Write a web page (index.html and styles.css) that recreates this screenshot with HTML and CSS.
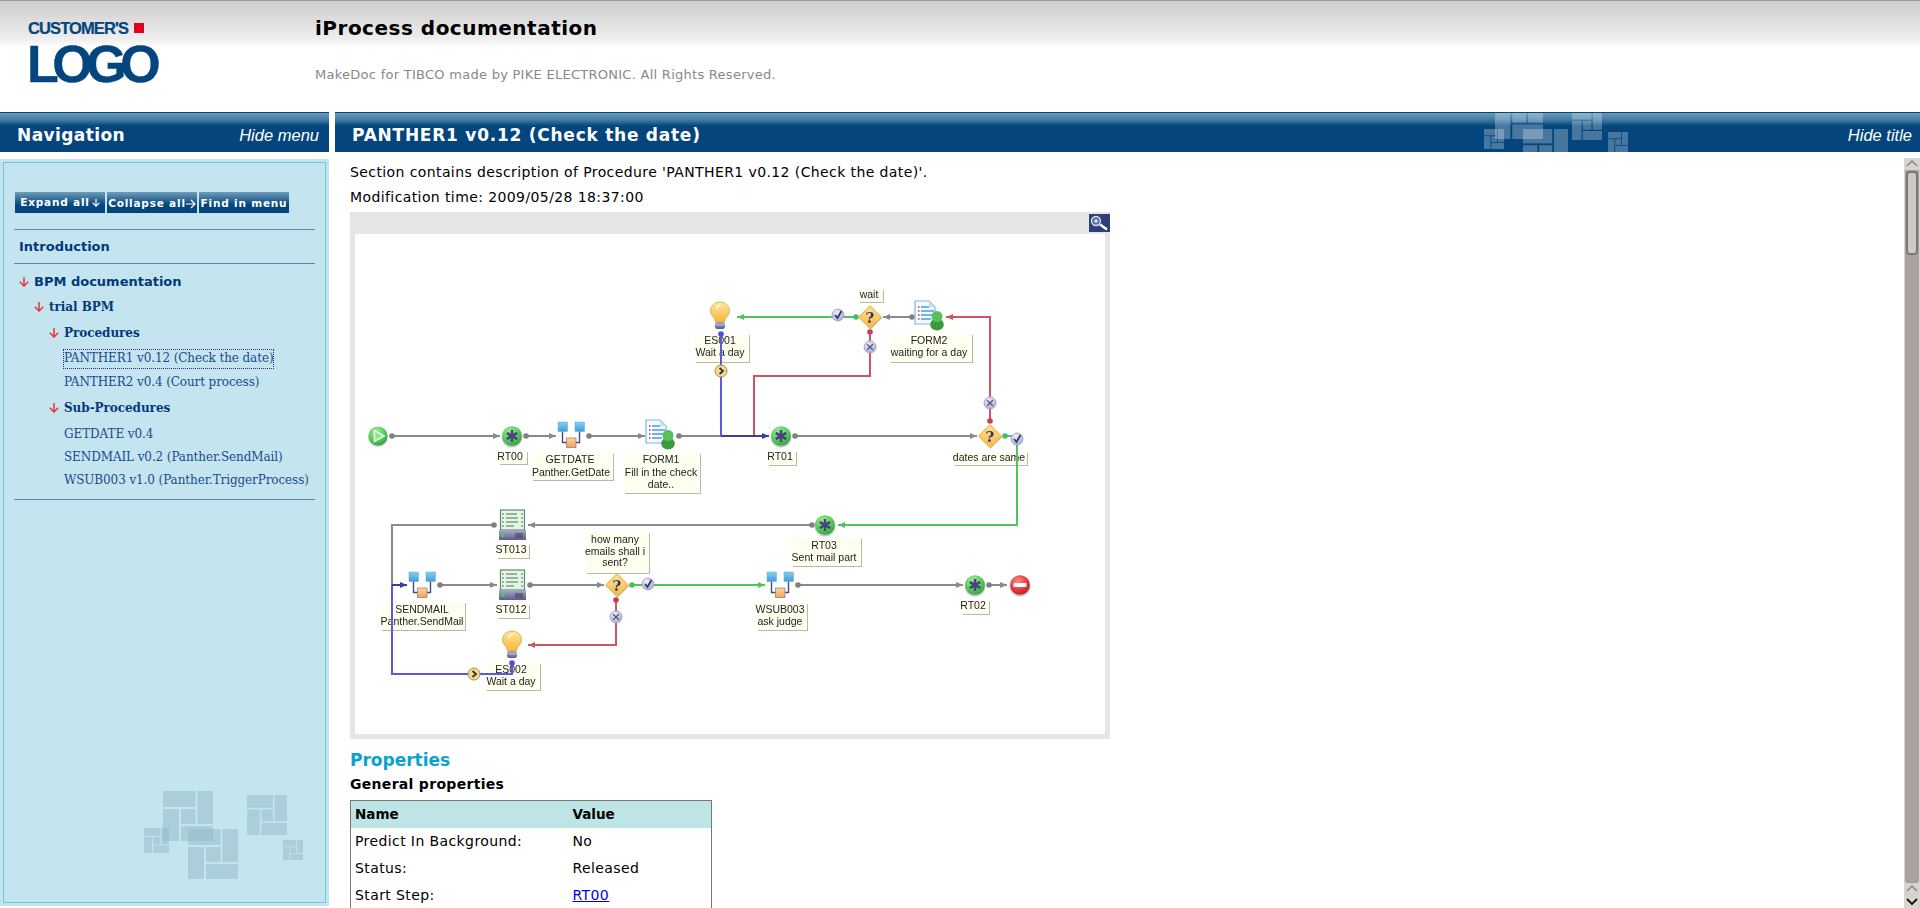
FILE: index.html
```html
<!DOCTYPE html>
<html lang="en">
<head>
  <meta charset="UTF-8">
  <title>iProcess documentation</title>
  <link rel="stylesheet" href="styles.css">
</head>
<body>
  <svg class="defs" width="0" height="0">
    <defs>
      <g id="tile">
        <rect x="0" y="0" width="65" height="32"/>
        <rect x="69" y="0" width="31" height="66"/>
        <rect x="0" y="36" width="32" height="64"/>
        <rect x="36" y="36" width="29" height="30"/>
        <rect x="36" y="70" width="64" height="30"/>
      </g>
      <symbol id="arrow-down" viewBox="0 0 10 10"><path d="M5 0v9M.8 4.800L5 9l4.200-4.200" fill="none" stroke="currentColor" stroke-width="1.500"/></symbol>
      <symbol id="arrow-right" viewBox="0 0 10 10"><path d="M0 5h9M5 1l4 4-4 4" fill="none" stroke="currentColor" stroke-width="1.200"/></symbol>
    </defs>
  </svg>

  <header class="top">
    <div class="logo">
      <div class="logo-small">CUSTOMER'S<span class="logo-dot"></span></div>
      <div class="logo-big">LOGO</div>
    </div>
    <div class="top-text">
      <h1>iProcess documentation</h1>
      <p>MakeDoc for TIBCO made by PIKE ELECTRONIC. All Rights Reserved.</p>
    </div>
  </header>

  <div class="layout">
    <aside class="side">
      <div class="bar">
        <span class="bar-title">Navigation</span>
        <a class="bar-link">Hide menu</a>
      </div>
      <div class="panel-wrap">
        <div class="panel">
          <div class="buttons">
            <button class="btn btn-first">Expand all<svg class="btn-arrow-down" width="8" height="10"><use href="#arrow-down"/></svg></button>
            <button class="btn">Collapse all<svg class="btn-arrow-right" width="10" height="10"><use href="#arrow-right"/></svg></button>
            <button class="btn">Find in menu</button>
          </div>
          <div class="intro">Introduction</div>
          <ul class="tree">
            <li>
              <div class="node sans"><svg class="arrow" width="10" height="10"><use href="#arrow-down"/></svg>BPM documentation</div>
              <ul>
                <li>
                  <div class="node"><svg class="arrow" width="10" height="10"><use href="#arrow-down"/></svg>trial BPM</div>
                  <ul>
                    <li>
                      <div class="node"><svg class="arrow" width="10" height="10"><use href="#arrow-down"/></svg>Procedures</div>
                      <ul class="leaves">
                        <li><a class="leaf current">PANTHER1 v0.12 (Check the date)</a></li>
                        <li><a class="leaf">PANTHER2 v0.4 (Court process)</a></li>
                      </ul>
                    </li>
                    <li>
                      <div class="node"><svg class="arrow" width="10" height="10"><use href="#arrow-down"/></svg>Sub-Procedures</div>
                      <ul class="leaves">
                        <li><a class="leaf">GETDATE v0.4</a></li>
                        <li><a class="leaf">SENDMAIL v0.2 (Panther.SendMail)</a></li>
                        <li><a class="leaf">WSUB003 v1.0 (Panther.TriggerProcess)</a></li>
                      </ul>
                    </li>
                  </ul>
                </li>
              </ul>
            </li>
          </ul>
          <svg class="mosaic-side" viewBox="0 0 160 90" width="160" height="90">
            <g fill="#8fb9c6" fill-opacity="0.5">
              <use href="#tile" transform="translate(19 0) scale(.5)"/>
              <use href="#tile" transform="translate(44 38) scale(.5)"/>
              <use href="#tile" transform="translate(103 4) scale(.4)"/>
              <use href="#tile" transform="translate(0 37) scale(.25)"/>
              <use href="#tile" transform="translate(139 49) scale(.2)"/>
            </g>
          </svg>
        </div>
      </div>
    </aside>

    <main class="main">
      <div class="bar">
        <span class="bar-title main-title">PANTHER1 v0.12 (Check the date)</span>
        <svg class="mosaic-bar" viewBox="0 0 150 40" width="150" height="40">
          <g fill="#fff" fill-opacity="0.27">
            <use href="#tile" transform="translate(11 -22) scale(.48)"/>
            <use href="#tile" transform="translate(39 16) scale(.45)"/>
            <use href="#tile" transform="translate(88 -3) scale(.3)"/>
            <use href="#tile" transform="translate(0 16) scale(.2)"/>
            <use href="#tile" transform="translate(124 19) scale(.2)"/>
          </g>
        </svg>
        <a class="bar-link">Hide title</a>
      </div>
      <div class="body-row">
        <div class="content">
          <p class="line">Section contains description of Procedure 'PANTHER1 v0.12 (Check the date)'.</p>
          <p class="line">Modification time: 2009/05/28 18:37:00</p>

          <div class="diagram">
            <svg class="zoom-icon" viewBox="0 0 21 18" width="21" height="18">
              <rect width="21" height="18" fill="#2f3f78"/>
              <circle cx="7" cy="7" r="4.500" fill="#5f6f9f" stroke="#dfe4f0" stroke-width="1.300"/>
              <path d="M5 7h4M7 5v4" stroke="#fff" stroke-width="1"/>
              <path d="M11 10.500l7 5" stroke="#fff" stroke-width="2.500"/>
            </svg>
            <svg class="flow" viewBox="355 234 750 500" width="750" height="500">
              <defs>
                <marker id="a-grey" markerUnits="userSpaceOnUse" markerWidth="8" markerHeight="8" refX="7" refY="4" orient="auto"><path d="M0 1l7 3-7 3z" fill="#8a8a8a"/></marker>
                <marker id="a-green" markerUnits="userSpaceOnUse" markerWidth="8" markerHeight="8" refX="7" refY="4" orient="auto"><path d="M0 1l7 3-7 3z" fill="#50c45f"/></marker>
                <marker id="a-red" markerUnits="userSpaceOnUse" markerWidth="8" markerHeight="8" refX="7" refY="4" orient="auto"><path d="M0 1l7 3-7 3z" fill="#cc5560"/></marker>
                <marker id="a-dark" markerUnits="userSpaceOnUse" markerWidth="8" markerHeight="8" refX="7" refY="4" orient="auto"><path d="M0 1l7 3-7 3z" fill="#43389c"/></marker>
                <marker id="d-grey" markerUnits="userSpaceOnUse" markerWidth="8" markerHeight="8" refX="4" refY="4"><circle cx="4" cy="4" r="2.800" fill="#808080"/></marker>
                <marker id="d-green" markerUnits="userSpaceOnUse" markerWidth="8" markerHeight="8" refX="4" refY="4"><circle cx="4" cy="4" r="2.800" fill="#40c060"/></marker>
                <marker id="d-red" markerUnits="userSpaceOnUse" markerWidth="8" markerHeight="8" refX="4" refY="4"><circle cx="4" cy="4" r="2.800" fill="#c84050"/></marker>
                <marker id="d-blue" markerUnits="userSpaceOnUse" markerWidth="8" markerHeight="8" refX="4" refY="4"><circle cx="4" cy="4" r="2.800" fill="#4a50d8"/></marker>

                <radialGradient id="g-green" cx="40%" cy="30%" r="75%"><stop offset="0" stop-color="#a5ee9a"/><stop offset="0.6" stop-color="#55cc5a"/><stop offset="1" stop-color="#2f9c3f"/></radialGradient>
                <radialGradient id="g-red" cx="40%" cy="30%" r="75%"><stop offset="0" stop-color="#f88"/><stop offset="0.6" stop-color="#e83a3a"/><stop offset="1" stop-color="#b81c24"/></radialGradient>
                <linearGradient id="g-yellow" x1="0" y1="0" x2="0" y2="1"><stop offset="0" stop-color="#ffe79a"/><stop offset="1" stop-color="#f6b63c"/></linearGradient>
                <linearGradient id="g-blue" x1="0" y1="0" x2="0" y2="1"><stop offset="0" stop-color="#86cdf4"/><stop offset="1" stop-color="#3f9fdc"/></linearGradient>
                <linearGradient id="g-orange" x1="0" y1="0" x2="0" y2="1"><stop offset="0" stop-color="#ffd49a"/><stop offset="1" stop-color="#f4a258"/></linearGradient>
                <radialGradient id="g-lav" cx="40%" cy="30%" r="75%"><stop offset="0" stop-color="#f0f0fa"/><stop offset="1" stop-color="#a8a8cc"/></radialGradient>
                <linearGradient id="g-base" x1="0" y1="0" x2="0" y2="1"><stop offset="0" stop-color="#a8a8c8"/><stop offset="1" stop-color="#5c5c88"/></linearGradient>

                <g id="start"><circle r="10" cy="1" fill="#9a9a9a" fill-opacity=".5"/><circle r="9.500" fill="url(#g-green)"/><path d="M-3.500-5.500L6 0l-9.500 5.500z" fill="#8ee58a" stroke="#e8fbe8" stroke-width="1.500"/></g>
                <g id="star"><circle r="10.500" cy="1" fill="#8a8a8a" fill-opacity=".5"/><circle r="9.800" fill="url(#g-green)"/><path d="M0-6V6M-5.200-3L5.200 3M-5.200 3L5.200-3" stroke="#47477a" stroke-width="2.600"/></g>
                <g id="end"><circle r="10.500" cy="1" fill="#8a8a8a" fill-opacity=".5"/><circle r="9.800" fill="url(#g-red)"/><rect x="-6.500" y="-2" width="13" height="4" rx="1" fill="#fff"/></g>
                <g id="diamond"><path d="M0-11.500L11.500 0 0 11.500-11.500 0z" fill="#b0a080" transform="translate(.5 1)"/><path d="M0-11L11 0 0 11-11 0z" fill="url(#g-yellow)" stroke="#f0c060" stroke-linejoin="round" stroke-width="1.500"/><text class="quest" y="5.500">?</text></g>
                <g id="bulb"><path d="M0-15c5.500 0 9.500 4 9.500 9 0 4.500-4.500 6-5 11h-9c-.5-5-5-6.500-5-11 0-5 4-9 9.500-9z" fill="url(#g-yellow)" stroke="#c9a94a" stroke-width=".8"/><path d="M-4-10c2-2 5-2.500 6-2-3 1-5 3-5 6z" fill="#fff" fill-opacity=".8"/><rect x="-5" y="5" width="10" height="7" rx="2.500" fill="url(#g-base)"/><path d="M-4.500 8h9" stroke="#d8d8e8" stroke-width=".8"/></g>
                <g id="form">
                  <path d="M0 0h14l6 6v17H0z" fill="#f6fbff" stroke="#7ab8e8" stroke-width="1.200"/>
                  <path d="M14 0v6h6z" fill="#bfe0f8"/>
                  <path d="M6 6h8M6 10h13M6 14h13M6 18h10" stroke="#3f9fe8" stroke-width="1.500"/>
                  <path d="M3 6h1.500M3 10h1.500M3 14h1.500M3 18h1.500" stroke="#d83040" stroke-width="1.500"/>
                  <ellipse cx="22" cy="23.500" rx="6.800" ry="6" fill="#3b9a3b"/>
                  <circle cx="22" cy="15.500" r="5.500" fill="#58c058"/>
                </g>
                <g id="proc">
                  <path d="M4.500 9v11.500h9M21.500 9v11.500h-8" fill="none" stroke="#4a4a80" stroke-width="1.400"/>
                  <rect width="9.500" height="9.500" fill="url(#g-blue)" stroke="#6aa8d0" stroke-width=".5"/>
                  <rect x="17" width="9.500" height="9.500" fill="url(#g-blue)" stroke="#6aa8d0" stroke-width=".5"/>
                  <rect x="8.500" y="16" width="9.500" height="9.500" fill="url(#g-orange)" stroke="#8a7a70" stroke-width=".7"/>
                </g>
                <g id="server">
                  <rect x="1.500" width="24" height="20" fill="#e6f4e6" stroke="#5a8a70" stroke-width="1.200"/>
                  <path d="M7 4h11M7 8h12M7 12h12M7 16h8" stroke="#3a7a50" stroke-width="1.200"/>
                  <path d="M4 3v15M23 3v15" stroke="#80a090" stroke-width="1.500" stroke-dasharray="2 2"/>
                  <rect y="20" width="27" height="10" fill="url(#g-base)"/>
                  <circle cx="4" cy="25" r="2" fill="#40d060"/>
                  <path d="M17 23v5M19 23v5M21 23v5M23 23v5" stroke="#3a3a60"/>
                </g>
                <g id="check"><circle r="6" fill="url(#g-lav)" stroke="#9a9ac0" stroke-width=".8"/><path d="M-3 0l2.500 3L3.500-4" fill="none" stroke="#2f3a70" stroke-width="1.800"/></g>
                <g id="cross"><circle r="6" fill="url(#g-lav)" stroke="#9a9ac0" stroke-width=".8"/><path d="M-2.800-2.800L2.800 2.800M-2.800 2.800L2.800-2.800" stroke="#55557f" stroke-width="1.400"/></g>
                <g id="chev"><circle r="6" fill="#f4d898" stroke="#b08a40" stroke-width="1"/><path d="M-1.500-3L2 0l-3.500 3" fill="none" stroke="#333" stroke-width="1.800"/></g>
              </defs>

              <g class="labels">
                <g><rect x="499" y="451" width="28" height="13"/><text x="510" y="460">RT00</text></g>
                <g><rect x="532" y="453" width="81" height="27"/><text x="570" y="463">GETDATE</text><text x="571" y="476">Panther.GetDate</text></g>
                <g><rect x="624" y="453" width="76" height="40"/><text x="661" y="463">FORM1</text><text x="661" y="476">Fill in the check</text><text x="661" y="488">date..</text></g>
                <g><rect x="695" y="334" width="54" height="28"/><text x="720" y="344">ES001</text><text x="720" y="356">Wait a day</text></g>
                <g><rect x="859" y="289" width="24" height="13"/><text x="869" y="298">wait</text></g>
                <g><rect x="890" y="334" width="82" height="28"/><text x="929" y="344">FORM2</text><text x="929" y="356">waiting for a day</text></g>
                <g><rect x="768" y="451" width="28" height="14"/><text x="780" y="460">RT01</text></g>
                <g><rect x="954" y="452" width="73" height="13"/><text x="989" y="461">dates are same</text></g>
                <g><rect x="792" y="538" width="69" height="28"/><text x="824" y="549">RT03</text><text x="824" y="561">Sent mail part</text></g>
                <g><rect x="497" y="544" width="32" height="14"/><text x="511" y="553">ST013</text></g>
                <g><rect x="586" y="532" width="63" height="41"/><text x="615" y="543">how many</text><text x="615" y="555">emails shall i</text><text x="615" y="566">sent?</text></g>
                <g><rect x="381" y="602" width="84" height="28"/><text x="422" y="613">SENDMAIL</text><text x="422" y="625">Panther.SendMail</text></g>
                <g><rect x="497" y="604" width="32" height="14"/><text x="511" y="613">ST012</text></g>
                <g><rect x="757" y="603" width="50" height="27"/><text x="780" y="613">WSUB003</text><text x="780" y="625">ask judge</text></g>
                <g><rect x="962" y="600" width="27" height="14"/><text x="973" y="609">RT02</text></g>
                <g><rect x="486" y="663" width="54" height="27"/><text x="511" y="673">ES002</text><text x="511" y="685">Wait a day</text></g>
              </g>

              <g class="links">
                <path class="grey" d="M392 436H500"/>
                <path class="grey" d="M526 436H556"/>
                <path class="grey" d="M589 436H645"/>
                <path class="grey no-arrow" d="M679 436H721"/>
                <path class="grey" d="M795 436H977"/>
                <path class="grey" d="M912 317H883"/>
                <path class="grey" d="M812 525H528"/>
                <path class="grey no-arrow" d="M494 525H392V585"/>
                <path class="grey" d="M440 585H497"/>
                <path class="grey" d="M530 585H604"/>
                <path class="grey" d="M798 585H963"/>
                <path class="grey" d="M989 585H1007"/>
                <path class="green" d="M856 317H737"/>
                <path class="green" d="M1005 436H1017V525H838"/>
                <path class="green" d="M632 585H765"/>
                <path class="red" d="M990 421V317H946"/>
                <path class="red" d="M616 600V645H528"/>
                <path class="red no-arrow" d="M870 332V376H754V436"/>
                <path class="blue" d="M721 334V436"/>
                <path class="blue" d="M512 663V674H392V585"/>
                <path class="dark" d="M721 436H769"/>
                <path class="dark" d="M392 585H407"/>
              </g>

              <use href="#start" x="378" y="436"/>
              <use href="#star" x="512" y="436"/>
              <use href="#proc" x="558" y="422"/>
              <use href="#form" x="646" y="420"/>
              <use href="#bulb" x="720" y="317"/>
              <use href="#chev" x="721" y="371"/>
              <use href="#diamond" x="870" y="317"/>
              <use href="#check" x="838" y="315"/>
              <use href="#cross" x="870" y="347"/>
              <use href="#form" x="915" y="301"/>
              <use href="#star" x="781" y="436"/>
              <use href="#diamond" x="990" y="436"/>
              <use href="#cross" x="990" y="403"/>
              <use href="#check" x="1017" y="439"/>
              <use href="#star" x="825" y="525"/>
              <use href="#server" x="499" y="510"/>
              <use href="#server" x="499" y="570"/>
              <use href="#proc" x="409" y="572"/>
              <use href="#diamond" x="617" y="585"/>
              <use href="#check" x="648" y="584"/>
              <use href="#cross" x="616" y="617"/>
              <use href="#proc" x="767" y="572"/>
              <use href="#star" x="975" y="585"/>
              <use href="#end" x="1020" y="585"/>
              <use href="#bulb" x="512" y="646"/>
              <use href="#chev" x="474" y="674"/>
            </svg>
          </div>

          <h2>Properties</h2>
          <h3>General properties</h3>
          <table class="props">
            <tr><th>Name</th><th>Value</th></tr>
            <tr><td>Predict In Background:</td><td>No</td></tr>
            <tr><td>Status:</td><td>Released</td></tr>
            <tr><td>Start Step:</td><td><a href="#">RT00</a></td></tr>
          </table>
        </div>
        <div class="scrollbar">
          <svg class="sb-btn" viewBox="0 0 16 12" width="16" height="12"><path d="M3 8l5-5 5 5" fill="none" stroke="#8c8680" stroke-width="1.500"/></svg>
          <div class="sb-track">
            <div class="sb-thumb"></div>
          </div>
          <div class="sb-foot">
            <svg viewBox="0 0 16 12" width="16" height="12"><path d="M3 8l5-5 5 5" fill="none" stroke="#8c8680" stroke-width="1.500"/></svg>
            <svg viewBox="0 0 16 12" width="16" height="12"><path d="M3 4l5 5 5-5" fill="none" stroke="#111" stroke-width="1.800"/></svg>
          </div>
        </div>
      </div>
    </main>
  </div>
</body>
</html>
```

FILE: styles.css
```css
* {
  box-sizing: border-box;
}
html, body {
  height: 100%;
}
body {
  margin: 0;
  display: flex;
  flex-direction: column;
  overflow: hidden;
  background: white;
  color: black;
  font-family: "DejaVu Sans", sans-serif;
  font-size: 14px;
  letter-spacing: 0.4px;
}
.defs {
  position: absolute;
}

/* top */
.top {
  display: flex;
  height: 112px;
  flex-shrink: 0;
  border-top: 1px solid #a09c94;
  background: linear-gradient(#cdcdcd, #eeeeee 38px, white 46px);
}
.logo {
  width: 315px;
  padding: 19px 0 0 28px;
  color: #03457c;
  font-family: "Liberation Sans", sans-serif;
  font-weight: bold;
}
.logo-small {
  display: flex;
  align-items: center;
  height: 16px;
  font-size: 16.5px;
  letter-spacing: -0.9px;
  -webkit-text-stroke: 0.2px #03457c;
}
.logo-dot {
  width: 10px;
  height: 10px;
  margin-left: 6px;
  background: #e2001a;
}
.logo-big {
  width: 130px;
  margin: 3px 0 0 -1px;
  font-size: 52px;
  line-height: 50px;
  letter-spacing: -6.500px;
  -webkit-text-stroke: 0.4px #03457c;
}
.top-text h1 {
  margin: 15px 0 0;
  font-size: 20px;
  line-height: 24px;
  letter-spacing: 0.5px;
}
.top-text p {
  margin: 25px 0 0;
  font-size: 13px;
  line-height: 20px;
  letter-spacing: 0.27px;
  color: #888;
}

/* layout */
.layout {
  flex: 1;
  display: flex;
  gap: 6px;
  min-height: 0;
}
.side {
  width: 329px;
  display: flex;
  flex-direction: column;
}
.main {
  flex: 1;
  min-width: 0;
  display: flex;
  flex-direction: column;
}
.bar {
  position: relative;
  display: flex;
  justify-content: space-between;
  align-items: center;
  height: 40px;
  flex-shrink: 0;
  padding: 5px 10px 0 17px;
  border-top: 1px solid #03457c;
  background: linear-gradient(#6b98b6, #3f7ba3 7px, #03457c 13px);
  color: white;
}
.main .bar {
  padding-right: 8px;
}
.bar-title {
  font-size: 17px;
  font-weight: bold;
  letter-spacing: 0.4px;
}
.main-title {
  letter-spacing: 0.75px;
}
.bar-link {
  font-family: "Liberation Sans", sans-serif;
  font-size: 16.5px;
  font-style: italic;
  letter-spacing: 0;
}
.mosaic-bar {
  position: absolute;
  left: 1149px;
  top: 0;
}

/* side panel */
.panel-wrap {
  flex: 1;
  margin: 7px 0 2px;
  padding: 3px;
  background: #c4e5f0;
  min-height: 0;
}
.panel {
  position: relative;
  height: 100%;
  padding: 29px 10px 0;
  border: 1px solid #6ccadb;
  overflow: hidden;
}
.buttons {
  display: flex;
  gap: 2px;
  margin: 0 0 16px 1px;
}
.btn {
  width: 90px;
  height: 21px;
  padding: 0;
  border: none;
  background: linear-gradient(#6f9dbb, #03457c 13px);
  color: white;
  font-family: "DejaVu Sans", sans-serif;
  font-size: 10.5px;
  font-weight: bold;
  letter-spacing: 0.8px;
  white-space: nowrap;
}
.btn-first {
  padding-bottom: 2px;
}
.btn-arrow-down {
  margin-left: 2px;
  vertical-align: -2px;
}
.btn-arrow-right {
  vertical-align: -2px;
}
.intro {
  height: 35px;
  padding-left: 5px;
  border-top: 1px solid #5f85aa;
  border-bottom: 1px solid #5f85aa;
  color: #03397a;
  font-size: 13px;
  font-weight: bold;
  letter-spacing: 0;
  line-height: 34px;
}
.tree {
  padding: 6px 0 4px 5px;
  border-bottom: 1px solid #5f85aa;
}
.tree, .tree ul {
  margin: 0;
  list-style: none;
}
.tree ul {
  padding: 0 0 0 15px;
}
.node {
  height: 23px;
  margin-bottom: 3px;
  color: #03397a;
  font-family: "DejaVu Serif", serif;
  font-size: 12px;
  font-weight: bold;
  letter-spacing: -0.05px;
  line-height: 23px;
  white-space: nowrap;
}
.node.sans {
  font-family: "DejaVu Sans", sans-serif;
  font-size: 13px;
  letter-spacing: 0;
}
.arrow {
  margin-right: 5px;
  color: #e8323c;
  vertical-align: -1px;
}
.tree ul.leaves {
  padding-left: 15px;
  margin-bottom: 3px;
}
.leaf {
  display: inline-block;
  color: #1a4a8a;
  font-family: "DejaVu Serif", serif;
  font-size: 12px;
  letter-spacing: -0.1px;
  line-height: 23px;
  white-space: nowrap;
}
.current {
  height: 20px;
  margin: 1px 0 2px -1px;
  padding: 0 1px;
  outline: 1px dotted #4a1a8a;
  outline-offset: -1px;
  line-height: 19px;
}
.mosaic-side {
  position: absolute;
  right: 21px;
  bottom: 21px;
}

/* content */
.body-row {
  flex: 1;
  display: flex;
  min-height: 0;
}
.content {
  flex: 1;
  min-width: 0;
  padding: 8px 0 0 15px;
  overflow: hidden;
}
.line {
  margin: 0;
  line-height: 25px;
}
.diagram {
  position: relative;
  width: 760px;
  margin-top: 2px;
  padding: 22px 5px 5px;
  background: #e5e5e5;
}
.zoom-icon {
  position: absolute;
  right: 0;
  top: 2px;
}
.flow {
  display: block;
  background: white;
  filter: blur(0.35px);
}
.labels rect {
  fill: #fffff0;
  filter: drop-shadow(1px 1px 0 #b8b8b0);
}
.labels text {
  font-family: "Liberation Sans", sans-serif;
  font-size: 10.5px;
  letter-spacing: 0;
  fill: #222;
  text-anchor: middle;
}
.quest {
  font-family: "DejaVu Serif", serif;
  font-size: 15px;
  font-weight: bold;
  letter-spacing: 0;
  fill: #33337a;
  text-anchor: middle;
}
.links path {
  fill: none;
  stroke-width: 2;
}
.links .grey {
  stroke: #8a8a8a;
  marker-start: url(#d-grey);
  marker-end: url(#a-grey);
}
.links .green {
  stroke: #50c45f;
  marker-start: url(#d-green);
  marker-end: url(#a-green);
}
.links .red {
  stroke: #cc5560;
  marker-start: url(#d-red);
  marker-end: url(#a-red);
}
.links .blue {
  stroke: #5a5ae0;
  marker-start: url(#d-blue);
}
.links .dark {
  stroke: #43389c;
  marker-end: url(#a-dark);
}
.links .no-arrow {
  marker-end: none;
}
h2 {
  margin: 9px 0 0;
  color: #0ba3cc;
  font-size: 17px;
  letter-spacing: 0;
  line-height: 24px;
}
h3 {
  margin: 2px 0 6px;
  font-size: 14px;
  letter-spacing: 0.3px;
  line-height: 20px;
}
.props {
  width: 362px;
  border-collapse: collapse;
  border: 1px solid #777;
}
.props th, .props td {
  height: 27px;
  padding: 0 4px;
  text-align: left;
}
.props th {
  background: #bde5e5;
  font-size: 13.5px;
  letter-spacing: 0;
}
.props th:first-child, .props td:first-child {
  width: 218px;
}
.props a {
  color: #0000ee;
}

/* scrollbar */
.scrollbar {
  width: 16px;
  margin-top: 6px;
  display: flex;
  flex-direction: column;
  background: #d8d4d0;
}
.sb-btn {
  flex-shrink: 0;
}
.sb-track {
  flex: 1;
  margin: 0 1px 0;
  padding: 1px 0 0;
  border: 1px solid #a8a09c;
  border-top: none;
  border-radius: 0 0 3px 3px;
  background: #aaa29e;
}
.sb-thumb {
  height: 84px;
  border: 2px solid #7d7772;
  border-radius: 4px;
  background: #cdc9c5;
}
.sb-foot {
  display: flex;
  flex-direction: column;
  flex-shrink: 0;
  height: 25px;
}
```
